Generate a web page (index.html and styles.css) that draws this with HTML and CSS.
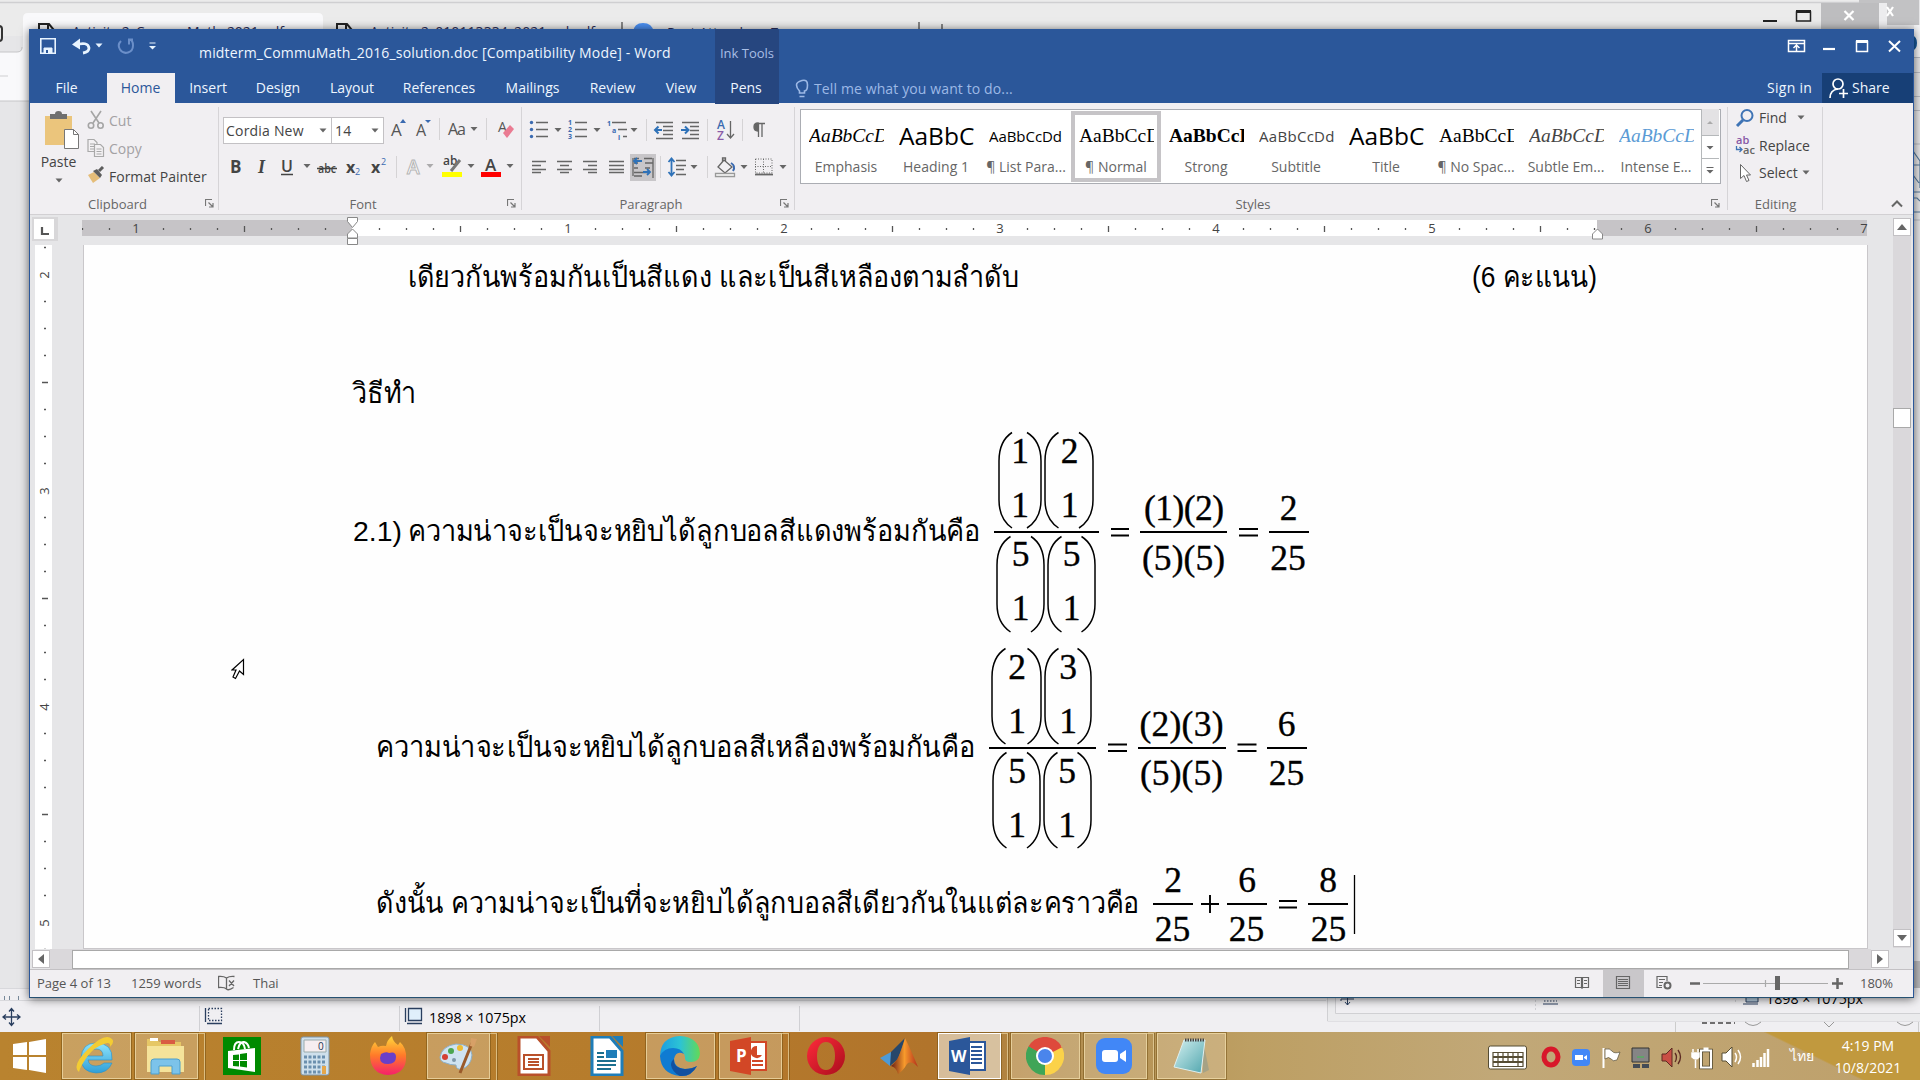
FILE: index.html
```html
<!DOCTYPE html>
<html lang="en">
<head>
<meta charset="utf-8">
<title>midterm_CommuMath_2016_solution.doc [Compatibility Mode] - Word</title>
<link rel="stylesheet" href="styles.css">
</head>
<body>
<svg width="0" height="0" class="defs">
  <defs>
    <symbol id="launch" viewBox="0 0 9 9"><path d="M.5 7V.5H7M3.500 3.500 7.500 7.500M8 4v4H4" fill="none" stroke="#777" stroke-width="1.200"/></symbol>
    <path id="dd" d="M-3.500-2h7L0 2z" fill="#666"/>
    <linearGradient id="ieg" x2="0" y2="1"><stop stop-color="#8fe4fb"/><stop offset="1" stop-color="#2f9fd8"/></linearGradient>
    <linearGradient id="ffg" x2="0" y2="1"><stop stop-color="#ffd83b"/><stop offset=".5" stop-color="#ff7a29"/><stop offset="1" stop-color="#f5206b"/></linearGradient>
    <linearGradient id="edg" x2="1"><stop stop-color="#1b9de2"/><stop offset=".5" stop-color="#2cc3d5"/><stop offset="1" stop-color="#62d957"/></linearGradient>
    <linearGradient id="opg" x2="1" y2="1"><stop stop-color="#ff2b3b"/><stop offset="1" stop-color="#a90d1c"/></linearGradient>
    <linearGradient id="ntg" x2="1" y2="1"><stop stop-color="#d5f1f1"/><stop offset="1" stop-color="#4fa5ad"/></linearGradient>
    <linearGradient id="mlg" x2="1"><stop stop-color="#6b1d14"/><stop offset=".5" stop-color="#f79a2c"/><stop offset="1" stop-color="#b3301b"/></linearGradient>
  </defs>
</svg>

<main class="desktop">
  <svg class="backdrop" width="1920" height="1032" viewBox="0 0 1920 1032">
    <rect width="1920" height="1032" fill="#e6e6e8"/>
    <rect width="1886" height="36" fill="#ebebeb"/>
    <path d="M0 2.500h1886V30" stroke="#cfcfd1" fill="none" stroke-width="1.500"/>
    <path d="M0 52h17q6 0 6-6V18q0-5 5-5h290q5 0 5 5v20H60v63H0z" fill="#f9f9fb"/>
    <path d="M0 52h17q5 0 5-5M0 101h30" stroke="#c6c6c8" fill="none"/>
    <path d="M0 76h8" stroke="#cfcfd1"/>
    <path d="M-8 26h7q3 0 3 3v9q0 3-3 3h-7" stroke="#333" fill="none" stroke-width="2"/>
    <g fill="none" stroke="#222" stroke-width="2"><path d="M39 40V24h10l5 6v10M48 24v7M337 40V24h10l5 6v10M346 24v7"/></g>
    <g class="ui" font-size="14" fill="#2d2f5a"><text x="72" y="37" textLength="212">Activity 2_CommuMath_2021.pdf</text><text x="370" y="37" textLength="225">Activity 2_010113334_2021_ml.pdf</text><text x="667" y="38">Post Attendee - Zoom</text></g>
    <path d="M622 22v10M919 22v10M942 24v8" stroke="#666" stroke-width="1.500"/>
    <path d="M633 32q1-9 10-9t11 9z" fill="#4a8ef0"/>
    <path d="M1859 0h60v25h-60z" fill="#c2c2c4"/><path d="M1878 3h9v28h-9z" fill="#ececee"/><path d="M1821 3h58v27h-58z" fill="#bdbdbf"/>
    <path d="M1887 7l6 9M1893 7l-6 9M1844.500 11l9 9M1853.500 11l-9 9" stroke="#fff" stroke-width="2.200"/>
    <path d="M1763 21h14" stroke="#222" stroke-width="2"/><path d="M1796.500 12h14v9h-14z" fill="none" stroke="#222" stroke-width="1.500"/><path d="M1796 11.500h15" stroke="#222" stroke-width="3"/>
    <rect x="1914" y="25" width="6" height="32" fill="#f5f5f7"/><ellipse cx="1913" cy="43" rx="4" ry="7" fill="#175a9e"/>
    <path d="M1914 57.500h6M1914 72.500h6M1914 96.500h6M1914 110.500h6M1914 144h6M1914 220h6" stroke="#b9bcc4"/>
    <path d="M1913 151l7 10v27M1913 165h7M1913 175l6 8M1913 192h7M1913 198h4l3 3M1913 212h7" stroke="#55799c" fill="none" stroke-width="1.200"/>
    <rect x="1914" y="961" width="6" height="30" fill="#bababd"/>
    <rect y="988" width="1920" height="44" fill="#f0eff2"/>
    <path d="M0 988.500h30M0 1000.500h1326" stroke="#d8d8dc"/>
    <path d="M4.500 996v4M9.500 996v4M18.500 996v4" stroke="#789"/>
    <path d="M199.500 1006v25M399.500 1006v25M599.500 1006v25M799.500 1006v25" stroke="#d0d0d4"/>
    <g fill="none" stroke="#2a3f5f" stroke-width="1.300"><path d="M11.500 1009v16M3.500 1017h16M9 1011.500l2.500-3 2.500 3M9 1022.500l2.500 3 2.500-3M6 1014.500l-3 2.500 3 2.500M17 1014.500l3 2.500-3 2.500"/>
    <path d="M205.500 1008v14M207 1023.500h15M405.500 1008v14M407 1023.500h15"/><path d="M208.500 1008.500h13v12h-13z" stroke-dasharray="1.500"/><path d="M408.500 1008.500h13v12h-13z" fill="#e0effb"/></g>
    <text class="ui" x="429" y="1023" font-size="15" textLength="97" lengthAdjust="spacingAndGlyphs">1898 × 1075px</text>
    <path d="M1327.500 997v24H1920" fill="none" stroke="#d0d0d3"/><path d="M1328 997h7v16h585v8h-592z" fill="#ebebed"/><path d="M1335.500 997v16.500H1920" fill="none" stroke="#d0d0d3"/>
    <g fill="none" stroke="#2a3f5f"><path d="M1347.500 997v8M1345 1002l2.500 3 2.500-3M1341 999h13M1543 1004h15M1743 1004h15M1341 999v2"/><path d="M1544 1001h13" stroke-dasharray="1.500"/><path d="M1746 996h12v6h-12z" fill="#b9d0e2"/></g>
    <path d="M1535.500 1000v12M1735.500 1000v4" stroke="#d0d0d4" stroke-dasharray="2"/>
    <text class="ui" x="1766" y="1004" font-size="15" textLength="97" lengthAdjust="spacingAndGlyphs">1898 × 1075px</text>
    <path d="M1675.500 1022v10M1918.500 1022v10" stroke="#ccc"/><path d="M1702 1023h33" stroke="#444" stroke-width="1.500" stroke-dasharray="5 3"/><path d="M1745 1022q8 7 16 0M1897 1022q8 7 16 0M1824 1022l5 5 5-5" fill="none" stroke="#999"/>
  </svg>

  <section class="word">
    <header class="head">
      <div class="titlebar">
        <svg class="qat" width="169" height="44" viewBox="30 29 169 44" fill="none" stroke="#e8f4ff">
          <path d="M40.800 38.800h14.400v14.400H40.800z" stroke-width="1.600"/><path d="M44 53v-5h8v5z" fill="#e8f4ff"/><path d="M46 53v-3h2v3z" fill="#2b579a" stroke="none"/>
          <path d="M75 45q13-4 14 3 0 4-6 5" stroke-width="2.800"/><path d="M72 44.500l8-6v11z" fill="#e8f4ff" stroke="none"/><path d="M95.500 43.500h7l-3.500 4z" fill="#e8f4ff" stroke="none"/>
          <path d="M121 41q-4 4-1 8.500t8 3 5-7-3.500-6M133 39.500h-4v5" stroke="#6b8fc9" stroke-width="2"/>
          <path d="M149.500 43h6" /><path d="M149 46h7l-3.500 3.500z" fill="#e8f4ff" stroke="none"/>
        </svg>
        <h1 class="title">midterm_CommuMath_2016_solution.doc [Compatibility Mode] - Word</h1>
        <span class="inktools">Ink Tools</span>
        <svg class="winbtns" width="134" height="44" viewBox="1780 29 134 44" fill="none" stroke="#fff" stroke-width="1.500">
          <path d="M1789.500 40.500h16v11h-16zM1789 43.500h17M1797.500 51v-6M1794.500 48l3-3 3 3"/><path d="M1824 49h12" stroke-width="2.200"/><path d="M1857.500 41.500h11v10h-11z"/><path d="M1857 41.500h12" stroke-width="3"/><path d="M1890 41l11 10.500M1901 41l-11 10.500" stroke-width="2"/>
        </svg>
      </div>
      <nav class="tabs">
        <span class="file">File</span><span class="on">Home</span><span>Insert</span><span>Design</span><span>Layout</span><span>References</span><span>Mailings</span><span class="review">Review</span><span class="view">View</span><span class="pens">Pens</span>
        <span class="tell"><svg width="14" height="20" viewBox="0 0 14 20" fill="none" stroke="#9db9e6" stroke-width="1.600"><path d="M4.500 14v-2Q1.500 9 1.500 6T7 1.500 12.500 6 9.500 12v2zM4.500 17.500h5"/></svg><b>Tell me what you want to do...</b></span>
        <span class="signin">Sign in</span>
        <span class="share"><svg width="20" height="22" viewBox="0 0 20 22" fill="none" stroke="#fff" stroke-width="1.700"><circle cx="9" cy="7" r="5"/><path d="M1 21q0-8 8-9M10 16.500h9M14.500 12v9"/></svg>Share</span>
      </nav>
    </header>

    <div class="ribbon">
      <section class="group clip">
        <div class="gbody">
          <div class="paste">
            <svg width="36" height="42" viewBox="0 0 36 42"><path d="M1 6h27v29H1z" fill="#ebc57c"/><path d="M6 4h5q0-3 3.500-3T18 4h5v5H6z" fill="#6f6f6f"/><path d="M20.500 19.500h9l5 5v14h-14z" fill="#fff" stroke="#777"/><path d="M29.500 19.500v5h5" fill="none" stroke="#777"/></svg>
            <span>Paste</span>
            <svg width="8" height="5" viewBox="-4 -2.500 8 5"><use href="#dd"/></svg>
          </div>
          <ul class="cmds">
            <li class="off"><svg width="18" height="20" viewBox="0 0 18 20" fill="none" stroke="#a5a5a5" stroke-width="1.600"><path d="M4 1l8 12M14 1L6 13"/><circle cx="4" cy="15.500" r="2.700"/><circle cx="13.500" cy="15.500" r="2.700"/></svg>Cut</li>
            <li class="off"><svg width="18" height="20" viewBox="0 0 18 20" fill="#f3f1f3" stroke="#a9a9a9" stroke-width="1.200"><path d="M1 1.500h6l3 3v9H1zM3 6h5M3 8.500h5M3 11h5"/><path d="M7.500 6.500h6l3 3v9h-9zM9.500 11h5M9.500 13.500h5M9.500 16h5"/></svg>Copy</li>
            <li><svg width="18" height="20" viewBox="0 0 18 20"><path d="M1 9l6-3 6 6-7 5z" fill="#e5bd79"/><path d="M6 5l4-2 5 6-2 3z" fill="#5d5d5d"/><path d="M12 5l4-4" stroke="#5d5d5d" stroke-width="3"/></svg>Format Painter</li>
          </ul>
        </div>
        <footer><span>Clipboard</span><svg width="9" height="9"><use href="#launch"/></svg></footer>
      </section>

      <section class="group font">
        <div class="gbody col">
          <div class="combos">
            <span class="combo">Cordia New<svg width="8" height="5" viewBox="-4 -2.500 8 5"><use href="#dd"/></svg></span><span class="combo size">14<svg width="8" height="5" viewBox="-4 -2.500 8 5"><use href="#dd"/></svg></span>
            <svg width="137" height="36" viewBox="384 113 137 36" class="ui" fill="#555">
              <text x="391" y="137" font-size="17">A</text><path d="M400 124l3-4 3 4z" fill="#3a6ab0"/><text x="416" y="137" font-size="16">A</text><path d="M425 121l3 3 3-3z" fill="#3a6ab0"/>
              <path d="M439.500 119v22M486.500 119v22" stroke="#d5d3d5"/><text x="448" y="136" font-size="16" textLength="18">Aa</text><use href="#dd" x="474" y="130"/>
              <text x="498" y="133" font-size="14">A</text><path d="M503 134l7-8 4 4-7 9z" fill="#ea7b92"/>
            </svg>
          </div>
          <svg width="302" height="40" viewBox="219 147 302 40" class="ui" fill="#444">
            <text x="230" y="173" font-size="17" font-weight="700">B</text><text x="258" y="173" font-size="18" class="serif" font-weight="700" font-style="italic">I</text><text x="281" y="172" font-size="16" font-weight="600">U</text><path d="M281 174.500h12M317 168.500h20" stroke="#444" stroke-width="1.400"/><use href="#dd" x="307" y="166"/>
            <text x="318" y="173" font-size="13" font-weight="600" textLength="18" lengthAdjust="spacingAndGlyphs">abc</text>
            <text x="346" y="173" font-size="16" font-weight="700">x</text><text x="355" y="175" font-size="9" fill="#3a6ab0">2</text><text x="371" y="173" font-size="16" font-weight="700">x</text><text x="381" y="165" font-size="9" fill="#3a6ab0">2</text>
            <path d="M396.500 156v22" stroke="#d5d3d5"/><text x="407" y="174" font-size="19" fill="#fff" stroke="#b5b5b5" font-weight="600">A</text><use href="#dd" x="430" y="166" opacity=".5"/>
            <text x="443" y="165" font-size="12" font-weight="600">ab</text><path d="M451 171l9-11" stroke="#777" stroke-width="3"/><path d="M442 172h20v5h-20z" fill="#ff0"/><use href="#dd" x="471" y="166"/>
            <text x="485" y="171" font-size="17" font-weight="600">A</text><path d="M481 172h20v5h-20z" fill="#f00"/><use href="#dd" x="510" y="166"/>
          </svg>
        </div>
        <footer><span>Font</span><svg width="9" height="9"><use href="#launch"/></svg></footer>
      </section>

      <section class="group para">
        <div class="gbody">
          <svg width="272" height="84" viewBox="522 103 272 84" class="ui" fill="none" stroke="#666" stroke-width="1.300">
            <path d="M536 122.500h12M536 129.500h12M536 136.500h12M575 122.500h12M575 129.500h12M575 136.500h12M612 122.500h14M618 129.500h9M623 136.500h4"/>
            <g fill="#3a6ab0" stroke="none"><circle cx="531.500" cy="122.500" r="1.700"/><circle cx="531.500" cy="129.500" r="1.700"/><circle cx="531.500" cy="136.500" r="1.700"/><g font-size="7" font-weight="700"><text x="568" y="125">1</text><text x="568" y="132">2</text><text x="568" y="139">3</text><text x="607" y="126">1</text><text x="612" y="133">a</text><text x="618" y="140">i</text></g></g>
            <g stroke="none"><use href="#dd" x="558" y="130"/><use href="#dd" x="597" y="130"/><use href="#dd" x="634" y="130"/><use href="#dd" x="694" y="167"/><use href="#dd" x="744" y="167"/><use href="#dd" x="783" y="167"/></g>
            <path d="M646.500 119v22M707.500 119v22M742.500 119v22M660.500 156v22M707.500 156v22" stroke="#d5d3d5" stroke-width="1"/>
            <path d="M656 122.500h17M663 126.500h10M663 130.500h10M663 134.500h10M656 138.500h17M682 122.500h17M690 126.500h9M690 130.500h9M690 134.500h9M682 138.500h17"/>
            <path d="M662 130h-6M658.500 126.500L655 130l3.500 3.500M681 130h7M685 126.500l3.500 3.500-3.500 3.500" stroke="#2f72b8" stroke-width="2"/>
            <g font-size="12" stroke="none" font-weight="600"><text x="717" y="129" fill="#3a6ab0">A</text><text x="717" y="140" fill="#8a5ca8">Z</text></g><path d="M730.500 121v17M727 134l3.500 4 3.500-4"/>
            <path d="M758.500 123v14M762 123v14M758 123.500h7"/><path d="M758 123v8q-4 0-4-4t4-4z" fill="#666"/>
            <path d="M532 161.500h14M532 165.500h9M532 169.500h14M532 172.500h9M557 161.500h15M560 165.500h9M557 169.500h15M560 172.500h9M583 161.500h14M588 165.500h9M583 169.500h14M588 172.500h9M609 161.500h15M609 165.500h15M609 169.500h15M609 172.500h15"/>
            <path d="M630 154h26v27h-26z" fill="#c8c6c9" stroke="none"/><path d="M634 158.500h5M634 163h4M634 168h4M634 172.500h14M634 176h8M644 158.500h8M645 163h8M645 168h5M653 158v20M633 158v18"/><path d="M634 161h8M637 158l-3 3 3 3M643 172h7M647 169l3 3-3 3" stroke="#2f72b8" stroke-width="1.800"/>
            <path d="M676 160.500h10M676 165.500h10M676 169.500h8M676 174.500h10"/><path d="M671.500 159v16M668.500 162l3-3.500 3 3.500M668.500 172l3 3.500 3-3.500" stroke="#2f72b8" stroke-width="1.800"/>
            <path d="M724 160l8 7-7 6-7-6zM722.500 162v-4h3v4"/><path d="M731 163q5 3 2 8" stroke="#3a6ab0" stroke-width="2"/><path d="M715.500 173.500h19v3h-19z" stroke="#999" fill="#fff"/>
            <path d="M755.500 159v14h16.500v-14zM763.500 159v15M755 166.500h17" stroke-dasharray="1 1.500" stroke-width="1"/><path d="M755 174.500h18" stroke-width="1.800"/>
          </svg>
        </div>
        <footer><span>Paragraph</span><svg width="9" height="9"><use href="#launch"/></svg></footer>
      </section>

      <section class="group styles">
        <div class="gbody">
          <ul class="gallery">
            <li><i class="se it">AaBbCcD</i><span>Emphasis</span></li>
            <li><i class="big">AaBbC</i><span>Heading 1</span></li>
            <li><i class="sm">AaBbCcDd</i><span>¶ List Para...</span></li>
            <li class="sel"><i class="se">AaBbCcD</i><span>¶ Normal</span></li>
            <li><i class="se bo">AaBbCcD</i><span>Strong</span></li>
            <li><i class="sm gr wide">AaBbCcDd</i><span>Subtitle</span></li>
            <li><i class="big">AaBbC</i><span>Title</span></li>
            <li><i class="se">AaBbCcD</i><span>¶ No Spac...</span></li>
            <li><i class="se it gr">AaBbCcD</i><span>Subtle Em...</span></li>
            <li><i class="se it bl">AaBbCcD</i><span>Intense E...</span></li>
            <li class="more"><svg width="18" height="75" viewBox="0 0 18 75"><path d="M0 0h18v26H0z" fill="#e3e2e4"/><path d="M.5 0v75M0 26.500h18M0 49.500h18" stroke="#b5b8ba"/><path d="M6 15l3-3 3 3z" fill="#aaa"/><path d="M5.500 37h7L9 40.500zM5.500 61h7L9 64.500zM5.500 58h7v1h-7z" fill="#666"/></svg></li>
          </ul>
        </div>
        <footer><span>Styles</span><svg width="9" height="9"><use href="#launch"/></svg></footer>
      </section>

      <section class="group edit">
        <div class="gbody">
          <ul class="cmds">
            <li><svg width="20" height="20" viewBox="0 0 20 20" fill="none" stroke="#3f74b5" stroke-width="2"><circle cx="12" cy="7.500" r="5.500"/><path d="M8 12l-6 6" stroke-width="3"/></svg>Find<svg class="gap" width="8" height="5" viewBox="-4 -2.500 8 5"><use href="#dd"/></svg></li>
            <li><svg width="20" height="20" viewBox="0 0 20 20" class="ui" font-size="11" font-weight="600"><text x="1" y="9" fill="#8757a5">ab</text><text x="8" y="19" fill="#666">ac</text><path d="M1.500 11v3.500H7M4.500 12l2.500 2.500L4.500 17" fill="none" stroke="#3f74b5" stroke-width="1.300"/></svg>Replace</li>
            <li><svg width="20" height="20" viewBox="0 0 20 20" fill="#fff" stroke="#666"><path d="M5.500 1.500v14l3.500-3 2.500 6 2.500-1-2.500-5.500h4z"/></svg>Select<svg class="near" width="8" height="5" viewBox="-4 -2.500 8 5"><use href="#dd"/></svg></li>
          </ul>
        </div>
        <footer><span>Editing</span></footer>
      </section>
      <svg class="collapse" width="14" height="9" viewBox="0 0 14 9"><path d="M2 7.500l5-5 5 5" fill="none" stroke="#666" stroke-width="2"/></svg>
    </div>

    <div class="work">
      <div class="main">
        <svg class="hruler" width="1863" height="30" viewBox="30 215 1863 30">
          <defs><pattern id="hp" x="352" y="220" width="216" height="16" patternUnits="userSpaceOnUse"><path d="M27.500 8v2M54.500 8v2M81.500 8v2M135.500 8v2M162.500 8v2M189.500 8v2M108.500 6v6" stroke="#555" stroke-width="1.300"/></pattern></defs>
          <path d="M32 217h26v24H32z" fill="#d8d7d9"/><path d="M34 219h20v20H34z" fill="#fff"/><path d="M42 227v7h7" fill="none" stroke="#555" stroke-width="2.200"/>
          <path d="M82 220h1785v16H82z" fill="#c6c4c7"/><path d="M352 220h1245v16H352z" fill="#fff"/><path d="M82 220h1785v16H82z" fill="url(#hp)"/>
          <g class="ui" font-size="13" fill="#444" text-anchor="middle"><text x="136" y="233">1</text><text x="568" y="233">1</text><text x="784" y="233">2</text><text x="1000" y="233">3</text><text x="1216" y="233">4</text><text x="1432" y="233">5</text><text x="1648" y="233">6</text><text x="1864" y="233">7</text></g>
          <path d="M347.500 217.500h10v4l-5 6-5-6zM352.500 229l5 5v4h-10v-4zM347.500 238.500h10v6h-10zM1597.500 229l5 5v5h-10v-5z" fill="#fff" stroke="#888"/>
        </svg>
        <div class="canvas">
          <svg class="vruler" width="53" height="704" viewBox="30 245 53 704">
            <defs><pattern id="vp" x="35" y="58" width="18" height="216" patternUnits="userSpaceOnUse"><path d="M9 27.500h2M9 54.500h2M9 81.500h2M9 135.500h2M9 162.500h2M9 189.500h2M7 108.500h6" stroke="#555" stroke-width="1.300"/></pattern></defs>
            <path d="M35 245h17v704H35z" fill="#fff"/><path d="M35 245h17v704H35z" fill="url(#vp)"/>
            <g class="ui" font-size="13" fill="#444" text-anchor="middle"><text transform="translate(49 275)rotate(-90)">2</text><text transform="translate(49 491)rotate(-90)">3</text><text transform="translate(49 707)rotate(-90)">4</text><text transform="translate(49 923)rotate(-90)">5</text></g>
          </svg>
          <article class="page">
            <div class="ln l1">
              <svg width="615" height="55" viewBox="407 250 615 55"><text x="407.500" y="287" textLength="611" lengthAdjust="spacingAndGlyphs">เดียวกันพร้อมกันเป็นสีแดง และเป็นสีเหลืองตามลำดับ</text></svg>
              <svg width="130" height="55" viewBox="1470 250 130 55"><text x="1472" y="287" textLength="125" lengthAdjust="spacingAndGlyphs">(6 คะแนน)</text></svg>
            </div>
            <div class="ln l2"><svg width="80" height="60" viewBox="350 360 80 60"><text x="352" y="402.500" textLength="64" lengthAdjust="spacingAndGlyphs">วิธีทำ</text></svg></div>
            <div class="ln l3">
              <svg width="640" height="215" viewBox="350 425 640 215"><text class="lat" x="353" y="541" textLength="49" lengthAdjust="spacingAndGlyphs">2.1)</text><text x="408" y="541" textLength="572" lengthAdjust="spacingAndGlyphs">ความน่าจะเป็นจะหยิบได้ลูกบอลสีแดงพร้อมกันคือ</text></svg>
              <svg class="eq" width="330" height="215" viewBox="990 425 330 215">
                <g class="par"><path d="M1012 432.500Q999 441 999 461V500Q999 519 1012 528M1027 432.500Q1041 441 1041 461V500Q1041 519 1027 528M1058.500 432.500Q1045 441 1045 461V500Q1045 519 1058.500 528M1079 432.500Q1093 441 1093 461V500Q1093 519 1079 528"/>
                <path d="M1010.500 536.500Q997 545 997 565V604Q997 623 1010.500 632M1031 536.500Q1044 545 1044 565V604Q1044 623 1031 632M1061.500 536.500Q1048 545 1048 565V604Q1048 623 1061.500 632M1081.500 536.500Q1095 545 1095 565V604Q1095 623 1081.500 632"/></g>
                <path class="bar" d="M994 532h105M1140 532h87M1269 532h40M1111 529h18M1111 535.500h18M1239 529h19M1239 535.500h19"/>
                <g class="num"><text x="1020" y="463">1</text><text x="1069.500" y="463">2</text><text x="1020" y="517">1</text><text x="1069.500" y="517">1</text><text x="1020.500" y="566">5</text><text x="1071.500" y="566">5</text><text x="1020.500" y="620">1</text><text x="1071.500" y="620">1</text>
                <text x="1184" y="519.500" textLength="80">(1)(2)</text><text x="1183.500" y="569.500" textLength="83">(5)(5)</text><text x="1288.500" y="519.500">2</text><text x="1288" y="569.500">25</text></g>
              </svg>
            </div>
            <div class="ln l4">
              <svg width="612" height="215" viewBox="374 640 612 215"><text x="376" y="757" textLength="599" lengthAdjust="spacingAndGlyphs">ความน่าจะเป็นจะหยิบได้ลูกบอลสีเหลืองพร้อมกันคือ</text></svg>
              <svg class="eq" width="330" height="215" viewBox="986 640 330 215">
                <g class="par"><path d="M1005.500 648.500Q992 657 992 677V716Q992 735 1005.500 744M1027.500 648.500Q1041 657 1041 677V716Q1041 735 1027.500 744M1058.500 648.500Q1045 657 1045 677V716Q1045 735 1058.500 744M1077.500 648.500Q1091 657 1091 677V716Q1091 735 1077.500 744"/>
                <path d="M1006.500 752.500Q993 761 993 781V820Q993 839 1006.500 848M1027 752.500Q1040 761 1040 781V820Q1040 839 1027 848M1057.500 752.500Q1044 761 1044 781V820Q1044 839 1057.500 848M1077.500 752.500Q1091 761 1091 781V820Q1091 839 1077.500 848"/></g>
                <path class="bar" d="M989 748h107M1138 748h88M1267 748h40M1108 744.500h19M1108 751h19M1237.500 744.500h19M1237.500 751h19"/>
                <g class="num"><text x="1017" y="679">2</text><text x="1068" y="679">3</text><text x="1017" y="733">1</text><text x="1068" y="733">1</text><text x="1017" y="783">5</text><text x="1067" y="783">5</text><text x="1017" y="837">1</text><text x="1067" y="837">1</text>
                <text x="1181.500" y="735.500" textLength="84">(2)(3)</text><text x="1181.500" y="785" textLength="83">(5)(5)</text><text x="1286.500" y="735.500">6</text><text x="1286.500" y="785">25</text></g>
              </svg>
            </div>
            <div class="ln l5">
              <svg width="774" height="94" viewBox="374 855 774 94"><text x="376" y="913" textLength="763" lengthAdjust="spacingAndGlyphs">ดังนั้น ความน่าจะเป็นที่จะหยิบได้ลูกบอลสีเดียวกันในแต่ละคราวคือ</text></svg>
              <svg class="eq" width="220" height="94" viewBox="1148 855 220 94">
                <path class="bar thin" d="M1153 904h40M1227 904h40M1308 904h40M1201 904h18M1210 895v18M1279 901h18M1279 907.500h18"/>
                <g class="num"><text x="1173" y="891.500">2</text><text x="1172.500" y="941">25</text><text x="1247" y="891.500">6</text><text x="1246.500" y="941">25</text><text x="1328" y="891.500">8</text><text x="1328.500" y="941">25</text></g>
                <path d="M1354.500 875v59" stroke="#000" stroke-width="1.300"/>
              </svg>
            </div>
          </article>
        </div>
        <div class="hscroll"><span class="btn"><svg width="6" height="10"><path d="M6 0v10L0 5z" fill="#666"/></svg></span><span class="thumb"></span><span class="btn"><svg width="6" height="10"><path d="M0 0v10l6-5z" fill="#666"/></svg></span></div>
      </div>
      <div class="vscroll"><span class="btn"><svg width="10" height="6"><path d="M0 6h10L5 0z" fill="#666"/></svg></span><span class="thumb"></span><span class="btn"><svg width="10" height="6"><path d="M0 0h10L5 6z" fill="#666"/></svg></span></div>
    </div>

    <footer class="status">
      <span>Page 4 of 13</span><span>1259 words</span>
      <svg width="35" height="26" viewBox="218 970 35 26" fill="none" stroke="#666" stroke-width="1.300"><path d="M226.500 989V978q-3-2-8-1.500v11q6-.5 8 1.500t7-1.500M226.500 978q3-2 8-1.500M229 980.500l5 5.500M234 980.500l-5 5.500"/></svg>
      <span>Thai</span>
      <svg class="views" width="282" height="27" viewBox="1570 970 282 27" fill="none" stroke="#666" stroke-width="1.200">
        <path d="M1575.500 977.500h6v10h-6zM1582.500 977.500h6v10h-6zM1577 980.500h3M1577 983.500h3M1584 980.500h3M1584 983.500h3M1582 977v12"/>
        <path d="M1603 970h41v27h-41z" fill="#c9c7ca" stroke="none"/><path d="M1616.500 976.500h13v12h-13zM1618 979.500h10M1618 981.500h10M1618 983.500h10M1618 985.500h10"/>
        <path d="M1667 981v-4.500h-10v11h5M1659 979.500h6M1659 982.500h4M1659 985.500h3"/><circle cx="1667.500" cy="985.500" r="3" stroke-width="2"/>
        <path d="M1690 983.500h10M1832 983.500h11M1837.500 978v11" stroke-width="2.500"/><path d="M1703 983.500h125M1765.500 980v7" stroke="#aaa"/><path d="M1777.500 976v14" stroke="#666" stroke-width="5"/>
      </svg>
      <span class="pct">180%</span>
    </footer>
  </section>

  <svg class="pointer" width="14" height="22" viewBox="0 0 14 22"><path d="M12.500 1.500v15l-4-3.500-4 7.500-2.500-1.500L5 12H1z" fill="#fff" stroke="#000" stroke-width="1.200"/></svg>

  <footer class="taskbar">
    <div class="apps">
      <div class="slot start"><svg width="34" height="34"><path d="M0 5l14-2v13H0zM16 3l17-3v16H16zM0 18h14v13L0 29zM16 18h17v16l-17-3z" fill="#fff"/></svg></div>
      <div class="slot app"><svg width="40" height="40"><path d="M8 20h19q0-7-7-7-7 0-8 7zM12 24q1 6 8 6 5 0 8-3h8q-4 10-16 10Q5 36 5 22 6 7 20 7q17 0 16 17z" fill="url(#ieg)" stroke="#2c8fc4" stroke-width=".6" fill-rule="evenodd"/><path d="M3 36Q-5 30 12 13T36 3q3 3-2 8 1-6-6-3-10 3-17 13T3 36z" fill="#f3cc33"/></svg></div>
      <div class="slot app stack"><svg width="40" height="40"><path d="M2 3h10l2 3h22v28H2z" fill="#e6c766"/><path d="M5 2h8v3H5z" fill="#fff"/><path d="M16 4h14v4H16z" fill="#d95b43"/><path d="M2 10h37v26H2z" fill="#f5e39a"/><path d="M6 38V26q0-3 3-3h23q3 0 3 3v12h-8v-8H14v8z" fill="#7cc3ea" stroke="#4c9fcc"/></svg></div>
      <div class="slot"><svg width="38" height="38"><path d="M0 0h38v38H0z" fill="#008a00"/><path d="M5 14l27-3v24L5 31z" fill="#fff"/><path d="M11 13q0-8 5-8t6 7M15 12q2-8 6-7t5 6" fill="none" stroke="#fff" stroke-width="2"/><path d="M10 18l6-.5V23h-6zM17 17l7-1v7h-7zM10 24h6v5.500l-6-.5zM17 24h7v6.500l-7-1z" fill="#008a00"/></svg></div>
      <div class="slot"><svg width="30" height="40"><rect x="1" y="1" width="28" height="38" rx="2" fill="#cfe0ec" stroke="#7d95a8"/><path d="M4 4h22v12H4z" fill="#f6eef0" stroke="#9aa"/><text x="18" y="14" class="ui" font-size="10" fill="#235">0</text><path d="M4 21h22M4 26h22M4 31h22M4 36h22" stroke="#6b8fae" stroke-width="3" stroke-dasharray="3 1.500"/><path d="M22 30h4v8h-4z" fill="#e5a64a"/></svg></div>
      <div class="slot"><svg width="40" height="40"><path d="M2 18Q3 10 7 6l3 5q4-2 8-1 1-6 6-10 1 6 6 9l2-3q7 6 6 17-1 15-18 16Q2 38 2 18z" fill="url(#ffg)"/><path d="M13 18q5-3 8-1 7-2 7 4 0 7-8 7t-8-6z" fill="#6a3fc8"/></svg></div>
      <div class="slot app stack"><svg width="42" height="40"><path d="M4 21Q6 10 20 8q15 0 16 11-1 11-10 14-6 1-6-4-6 0-10-2-6-1-6-6z" fill="#cfe3f1" stroke="#8cb0c9"/><circle cx="9" cy="21" r="3" fill="#d43f34"/><circle cx="15" cy="15" r="3" fill="#4ba651"/><circle cx="24" cy="12" r="3" fill="#edbb33"/><circle cx="18" cy="24" r="2" fill="#7e98ab"/><path d="M24 37l12-30" stroke="#9a5a2a" stroke-width="3"/><path d="M34 10l1-8 6 1-3 8z" fill="#d7a067"/></svg></div>
      <div class="slot"><svg width="34" height="40"><path d="M2 1h18l12 14v24H2z" fill="#fff" stroke="#b9502a" stroke-width="3"/><path d="M22 0h11v11z" fill="#b9502a"/><path d="M7 19h19v14H7zM11 23h11M11 26h11M11 29h11" fill="none" stroke="#b9502a" stroke-width="2"/></svg></div>
      <div class="slot"><svg width="34" height="40"><path d="M2 1h18l12 14v24H2z" fill="#fff" stroke="#1f7db8" stroke-width="3"/><path d="M22 0h11v11z" fill="#1f7db8"/><path d="M7 17h7M7 21h7M7 25h19M7 29h19M7 33h14" stroke="#1b6f8f" stroke-width="2"/><path d="M16 14h11v8H16z" fill="#1f7db8"/></svg></div>
      <div class="slot app"><svg width="42" height="42"><path d="M1 22Q1 2 21 1q19 1 20 18-1 8-9 8-7 0-6-5-1-7-9-7Q3 16 1 22z" fill="url(#edg)"/><path d="M1 21Q5 13 14 13q8 0 11 6-8-4-10 5 0 9 11 10 7 0 12-3-6 11-17 10Q2 39 1 21z" fill="#0f7bd2"/><path d="M15 24q-1 9 11 10 7 0 12-3-6 11-17 10-8-4-9-11 0-4 3-6z" fill="#1250a0"/></svg></div>
      <div class="slot app stack"><svg width="38" height="38"><path d="M15 5h21v28H15z" fill="#fff" stroke="#d24726" stroke-width="2"/><path d="M0 4l21-4v38L0 34z" fill="#d24726"/><path d="M22 24h11M22 28h11" stroke="#d24726" stroke-width="2"/><path d="M27 9a6 6 0 1 0 5 9h-5z" fill="#d24726"/><text x="6" y="25" class="ui" font-weight="700" font-size="17" fill="#fff">P</text></svg></div>
      <div class="slot"><svg width="40" height="40"><path d="M20 1a19 19 0 1 0 0 38 19 19 0 1 0 0-38zm0 5c6 0 9 6 9 14s-3 14-9 14-9-6-9-14 3-14 9-14z" fill="url(#opg)"/></svg></div>
      <div class="slot"><svg width="40" height="38"><path d="M1 21l11-6 6 6-7 8z" fill="#4d9ad6"/><path d="M12 15L26 1l-7 21-8 7z" fill="#27476b"/><path d="M26 1q5 10 13 29-7-7-11-3-4 7-9 10-2-7-7-8Q20 24 26 1z" fill="url(#mlg)"/></svg></div>
      <div class="slot app stack now"><svg width="38" height="38"><path d="M15 5h21v28H15z" fill="#fff" stroke="#2b579a" stroke-width="2"/><path d="M22 10h11M22 14h11M22 18h11M22 22h11M22 26h11" stroke="#2b579a" stroke-width="2"/><path d="M0 4l21-4v38L0 34z" fill="#2b579a"/><text x="2" y="25" class="ui" font-weight="700" font-size="16" fill="#fff">W</text></svg></div>
      <div class="slot app"><svg width="38" height="38"><path d="M19 19L2.500 9.500A19 19 0 0 1 35.500 9.500z" fill="#de4a3c"/><path d="M19 19L35.500 9.500A19 19 0 0 1 19 38z" fill="#fbd249"/><path d="M19 19v19A19 19 0 0 1 2.500 9.500z" fill="#3fa557"/><path d="M19 10h17.500L19 19z" fill="#de4a3c"/><path d="M11 24L2.500 9.500 19 19z" fill="#3fa557"/><circle cx="19" cy="19" r="9" fill="#fff"/><circle cx="19" cy="19" r="7" fill="#4a85ec"/></svg></div>
      <div class="slot app stack"><svg width="38" height="38"><rect x="1" y="1" width="36" height="36" rx="9" fill="#4187f7"/><rect x="7" y="13" width="16" height="12" rx="3" fill="#fff"/><path d="M25 17l6-4v12l-6-4z" fill="#fff"/></svg></div>
      <div class="slot app"><svg width="38" height="40"><path d="M31 5l6 29-6 3z" fill="#a6a285"/><path d="M12 4h21l-4 33-27-6z" fill="url(#ntg)" stroke="#dfeeee"/><path d="M13 4h19" stroke="#444" stroke-width="3" stroke-dasharray="1.500 1"/></svg></div>
    </div>
    <svg class="tray" width="300" height="48" viewBox="1480 1032 300 48" fill="none">
      <rect x="1488.500" y="1046" width="38" height="23" rx="2" fill="#fff" stroke="#554c33"/><path d="M1493 1052.500h30v4h-30zM1493 1057.500h30v4h-30zM1493 1062.500h30v4h-30zM1498 1052v14M1503 1052v10M1508 1052v10M1513 1052v10M1518 1052v14" stroke="#554c33" stroke-width="1.200"/>
      <ellipse cx="1551" cy="1057" rx="7" ry="8" stroke="#d8182a" stroke-width="5"/>
      <rect x="1572" y="1049" width="18" height="17" rx="4" fill="#4187f7"/><path d="M1575 1055h8v5h-8zM1584 1057l3-2v5l-3-2z" fill="#fff"/>
      <path d="M1603.500 1048v20" stroke="#fff" stroke-width="2"/><path d="M1605 1049q5-1 7 2t8 1l-3 8q-4 2-6-1t-6 0z" fill="#fff" stroke="#554c33" stroke-width=".7"/>
      <path d="M1632 1048h17v14h-17z" fill="#858585" stroke="#333"/><path d="M1633 1064h7v4h-7zM1642 1064h7v4h-7z" fill="#444b55"/><path d="M1637 1057h7" stroke="#3fc04f"/>
      <path d="M1662 1054h4l6-6v19l-6-6h-4z" fill="#c94f45" stroke="#5c2a22"/><path d="M1675 1053q3 4 0 9M1678 1050q5 7 0 14" stroke="#5c2a22" stroke-width="1.300"/>
      <path d="M1701 1050.500h10v17h-10z" stroke="#4d452f" stroke-width="3.500"/><path d="M1701 1050.500h10v17h-10zM1703.500 1048.500h5" stroke="#fff" stroke-width="2"/><path d="M1695.500 1068v-8M1693 1052v-3M1698 1052v-3M1692 1053h7v4q-3 4-7 0z" stroke="#fff" stroke-width="1.500" fill="#fff"/>
      <path d="M1722 1053h4l6-6v20l-6-6h-4z" fill="#fff" stroke="#554c33"/><path d="M1735 1053q3 4 0 9M1738 1050q5 7 0 14" stroke="#fff" stroke-width="1.500"/>
      <path d="M1753.500 1067v-4M1757.500 1067v-7M1761 1067v-10M1764.500 1067v-14M1768 1067v-18" stroke="#fff" stroke-width="2.500"/>
    </svg>
    <span class="lang">ไทย</span>
    <time><span>4:19 PM</span><span>10/8/2021</span></time>
  </footer>
</main>
</body>
</html>
```

FILE: styles.css
```css
* { box-sizing: border-box; }
body { margin: 0; font-family: "Open Sans", "Noto Sans", sans-serif; font-size: 14px; color: #444; overflow: hidden; }
ul { list-style: none; margin: 0; padding: 0; }
svg { display: block; flex: none; }
.defs { position: absolute; }
.ui { font-family: "Open Sans", "Noto Sans", sans-serif; }
.serif { font-family: "Liberation Serif", serif; }

.desktop { width: 1920px; height: 1080px; position: relative; display: flex; flex-direction: column; }
.backdrop { height: 1032px; }

/* Word window floating over the other windows */
.word {
  position: absolute; left: 29px; top: 29px; width: 1885px; height: 969px;
  display: flex; flex-direction: column;
  border: 1px solid #2b579a; border-top: 0; border-bottom-color: #265172;
  background: #f1eff2; box-shadow: 0 1px 9px rgba(0, 0, 0, .6);
}
.head { height: 74px; background: #2b579a; color: #eef6ff; flex: none; white-space: nowrap; }
.titlebar { height: 44px; display: grid; grid-template-columns: 169px 516px 64px 1fr 134px; }
.title { margin: 0; font-size: 14px; font-weight: 400; line-height: 48px; letter-spacing: .18px; }
.inktools { background: #26467f; color: #a9bfe6; text-align: center; line-height: 48px; font-size: 13px; }
.winbtns { grid-column: 5; }
.tabs {
  height: 30px; line-height: 30px; text-align: center;
  display: grid; grid-template-columns: 77px 68px 66px 74px 74px 100px 87px 75px 64px 64px 1fr 65px 91px;
}
.tabs .file { padding-right: 4px; }
.tabs .on { background: #f1eff2; color: #2b579a; padding-right: 1px; }
.tabs .review { padding-right: 2px; }
.tabs .view { padding-right: 4px; }
.tabs .pens { background: #26467f; padding-right: 2px; }
.tabs b { font-weight: 400; letter-spacing: .12px; }
.tell { display: flex; align-items: center; gap: 5px; padding-left: 16px; color: #9db9e6; }
.signin { text-align: left; padding-left: 10px; letter-spacing: .3px; }
.share { background: #173f76; display: flex; align-items: center; gap: 3px; padding-left: 7px; margin-bottom: 1px; }

.ribbon { height: 112px; flex: none; display: flex; border-bottom: 1px solid #d2d0d3; }
.group { display: flex; flex-direction: column; background: linear-gradient(#d6d4d7, #d6d4d7) right 0 top 4px / 1px 103px no-repeat; }
.gbody { height: 91px; display: flex; }
.gbody.col { flex-direction: column; }
.group footer { display: grid; grid-template-columns: 1fr 9px; align-items: center; height: 19px; padding-right: 6px; font-size: 13px; color: #666; text-align: center; }
.clip { width: 189px; } .font { width: 303px; } .para { width: 273px; } .styles { width: 933px; } .edit { width: 95px; }
.clip footer { padding-left: 0; padding-right: 5px; } .styles footer { padding-right: 8px; }
.edit footer { grid-template-columns: 1fr; padding: 0; }
.paste { width: 56px; display: flex; flex-direction: column; align-items: center; padding: 7px 0 0 1px; }
.paste svg:first-child { margin-left: 7px; }
.paste span { line-height: 20px; }
.paste svg:last-child { margin-top: 6px; }
.cmds li { display: flex; align-items: center; height: 28px; gap: 4px; white-space: nowrap; }
.clip .cmds { padding: 3px 0 0 1px; }
.off { color: #a3a1a4; }
.combos { display: flex; align-items: center; padding: 10px 0 0 4px; height: 44px; }
.combo { width: 109px; height: 27px; border: 1px solid #c3c1c4; background: #fff; display: flex; align-items: center; justify-content: space-between; padding: 0 4px 0 2px; letter-spacing: .2px; }
.combo.size { width: 53px; margin-left: -1px; padding-left: 3px; }

.gallery { margin: 6px 0 0 5px; width: 921px; height: 75px; border: 1px solid #abadb3; background: #fff; display: grid; grid-template-columns: repeat(10, 90px) 19px; }
.gallery li { padding: 2px 8px 0; text-align: center; white-space: nowrap; }
.gallery i { display: block; height: 46px; line-height: 48px; font-style: normal; overflow: hidden; text-align: left; color: #000; width: 75px; }
.gallery span { display: block; line-height: 20px; margin: -1px -6px 0; color: #666; }
.gallery .sel { border: 4px solid #c6c4c7; margin: 1px 0 2px; padding: 0 4px; }
.gallery .sel i { margin-top: -3px; }
.gallery .more { padding: 0; margin: -1px 0 0 0; }
.se { font-family: "Liberation Serif", serif; font-size: 19.500px; }
.gallery .it { font-style: italic; } .bo { font-weight: 700; }
.big { font-size: 24.500px; } .sm { font-size: 15px; letter-spacing: -.05px; } .wide { letter-spacing: .3px; }
.gallery .gr { color: #444; } .gallery .bl { color: #5b9bd5; }
.edit .cmds { padding: 1px 0 0 7px; }
.edit .cmds li { gap: 4px; height: 27.500px; }
.edit .gap { margin-left: 6px; } .edit .near { margin-left: 0; }
.collapse { margin: 96px 0 0 67px; }

.work { height: 754px; flex: none; display: flex; background: #e6e6e8; }
.main { width: 1863px; display: flex; flex-direction: column; }
.canvas { display: flex; height: 704px; }
.page { width: 1785px; background: #fefefe; border: 1px solid #c9c7ca; border-top: 0; overflow: hidden; }
.page text { font-family: "Liberation Sans", sans-serif; font-size: 29px; fill: #000; }
.page .lat { font-size: 27px; }
.page .num text { font-family: "Liberation Serif", serif; font-size: 35.500px; text-anchor: middle; stroke: #000; stroke-width: .35px; }
.par { fill: none; stroke: #000; stroke-width: 1.500; }
.bar { fill: none; stroke: #000; stroke-width: 2; }
.thin { stroke-width: 1.900; }
.ln { display: flex; }
.l1 { padding: 5px 0 0 323px; gap: 448px; height: 115px; }
.l2 { padding-left: 266px; height: 65px; }
.l3 { padding-left: 266px; }
.l4 { padding-left: 290px; }
.l5 { padding-left: 290px; }
.btn { width: 18px; height: 18px; background: #fff; border: 1px solid #c3c1c4; display: flex; align-items: center; justify-content: center; }
.hscroll { height: 20px; padding: 0 2px; display: grid; grid-template-columns: 18px 1777px 18px; column-gap: 22px; align-items: center; background: linear-gradient(90deg, transparent 20px, #dad8db 20px, #dad8db 1841px, transparent 1841px); }
.hscroll .thumb { height: 19px; background: #fff; border: 1px solid #a9a9a9; }
.vscroll { width: 18px; padding: 3px 0 22px; display: flex; flex-direction: column; background: linear-gradient(#dad8db, #dad8db) 0 3px / 18px 730px no-repeat; }
.vscroll .thumb { height: 20px; margin: 172px 0 auto; background: #fff; border: 1px solid #a9a9a9; }

.status { height: 27px; display: flex; align-items: center; border-top: 1px solid #c3c1c4; padding-left: 7px; color: #555; white-space: nowrap; }
.status span { width: 94px; font-size: 13px; margin-top: -1px; }
.status span:nth-child(2) { width: 87px; }
.status .views { margin-left: auto; }
.status .pct { width: 61px; padding-left: 8px; }

.pointer { position: absolute; left: 231px; top: 658px; }

.taskbar {
  height: 48px; display: flex; align-items: center; color: #fff;
  background: linear-gradient(26deg, transparent 92.200%, #c1993e 92.400%) , linear-gradient(90deg, #b9832f 0, #b67c2c 600px, #b1742b 930px, #b28c4d 1050px, #bd9f63 1250px, #c1a878 1500px, #bea06a 1920px);
}
.apps { display: flex; height: 48px; width: 1480px; }
.slot { width: 73px; height: 48px; display: flex; align-items: center; justify-content: center; padding-right: 1px; }
.start { width: 60px; }
.app { width: 69px; height: 46px; margin: 1px 2px; border: 1px solid rgba(240, 220, 170, .75); background: rgba(225, 205, 170, .4); box-shadow: 0 0 0 1px rgba(110, 75, 15, .5); }
.stack { width: 63px; margin-right: 8px; padding-right: 3px; position: relative; }
.stack::after { content: ""; position: absolute; left: 62px; top: -1px; width: 6px; height: 46px; border: solid rgba(235, 215, 165, .7); border-width: 1px 1px 1px 0; box-shadow: 1px 0 0 rgba(110, 75, 15, .5); }
.now { background: rgba(235, 228, 212, .65); border-color: #fff; }
.lang { width: 54px; padding-left: 10px; font-size: 14px; }
time { display: flex; flex-direction: column; align-items: center; line-height: 22px; font-size: 14px; width: 68px; padding-top: 2px; }
```
